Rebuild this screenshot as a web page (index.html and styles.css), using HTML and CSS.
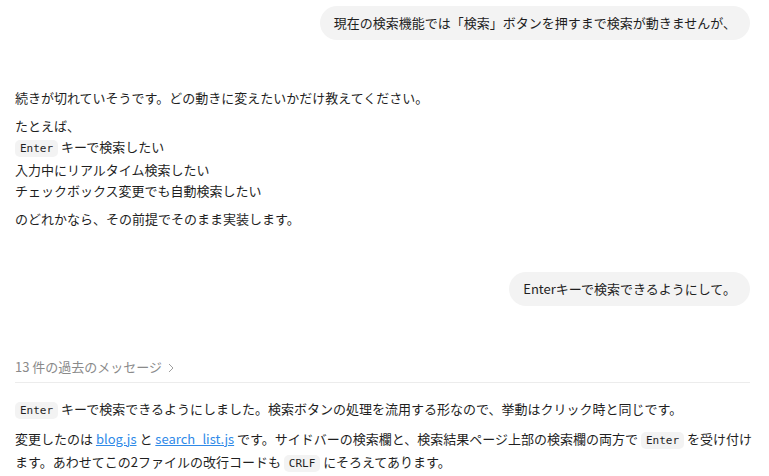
FILE: index.html
```html
<!DOCTYPE html>
<html lang="ja">
<head>
    <meta charset="UTF-8">
    <meta name="viewport" content="width=device-width, initial-scale=1.0">
    <title>チャット</title>
    <link rel="stylesheet" href="styles.css">
</head>
<body>
    <div class="chat">
        <div class="user-row">
            <div class="bubble">現在の検索機能では「検索」ボタンを押すまで検索が動きませんが、</div>
        </div>

        <div class="reply first">
            <p>続きが切れていそうです。どの動きに変えたいかだけ教えてください。</p>
            <p>たとえば、<br>
                <code>Enter</code> キーで検索したい<br>
                入力中にリアルタイム検索したい<br>
                チェックボックス変更でも自動検索したい</p>
            <p>のどれかなら、その前提でそのまま実装します。</p>
        </div>

        <div class="user-row second">
            <div class="bubble">Enterキーで検索できるようにして。</div>
        </div>

        <div class="history">13 件の過去のメッセージ
            <svg class="chev" width="6" height="10" viewBox="0 0 6 10"><path d="M1 1l4 4-4 4" fill="none" stroke="#a0a0a0" stroke-width="1"/></svg>
        </div>

        <div class="reply last">
            <p><code>Enter</code> キーで検索できるようにしました。検索ボタンの処理を流用する形なので、挙動はクリック時と同じです。</p>
            <p>変更したのは <a href="#">blog.js</a> と <a href="#">search_list.js</a> です。サイドバーの検索欄と、検索結果ページ上部の検索欄の両方で <code>Enter</code> を受け付けます。あわせてこの2ファイルの改行コードも <code>CRLF</code> にそろえてあります。</p>
        </div>
    </div>
</body>
</html>
```

FILE: styles.css
```css
body {
    margin: 0;
    background: #fff;
    color: #1f1f1f;
    font-family: "Noto Sans CJK JP", "Noto Sans", sans-serif;
    font-size: 13px;
    line-height: 21px;
}
.chat {
    padding: 6px 19px 0 15px;
}
.user-row {
    display: flex;
    justify-content: flex-end;
}
.user-row.second {
    margin-top: 43px;
}
.bubble {
    background: #f3f3f3;
    border-radius: 17px;
    padding: 6px 14px 7px;
}
.reply p {
    margin: 7px 0;
}
.reply.first {
    margin-top: 47px;
}
.history {
    margin-top: 50px;
    color: #8a8a8a;
    padding-bottom: 5px;
    border-bottom: 1px solid #ececec;
}
.chev {
    margin-left: 3px;
    vertical-align: -1px;
}
.reply.last {
    margin-top: 15px;
    margin-right: -8px;
}
code {
    font-family: "DejaVu Sans Mono", "Liberation Mono", monospace;
    font-size: 11px;
    background: #f3f3f3;
    border-radius: 5px;
    padding: 2px 5px;
}
a {
    color: #2f8ae8;
}
```
